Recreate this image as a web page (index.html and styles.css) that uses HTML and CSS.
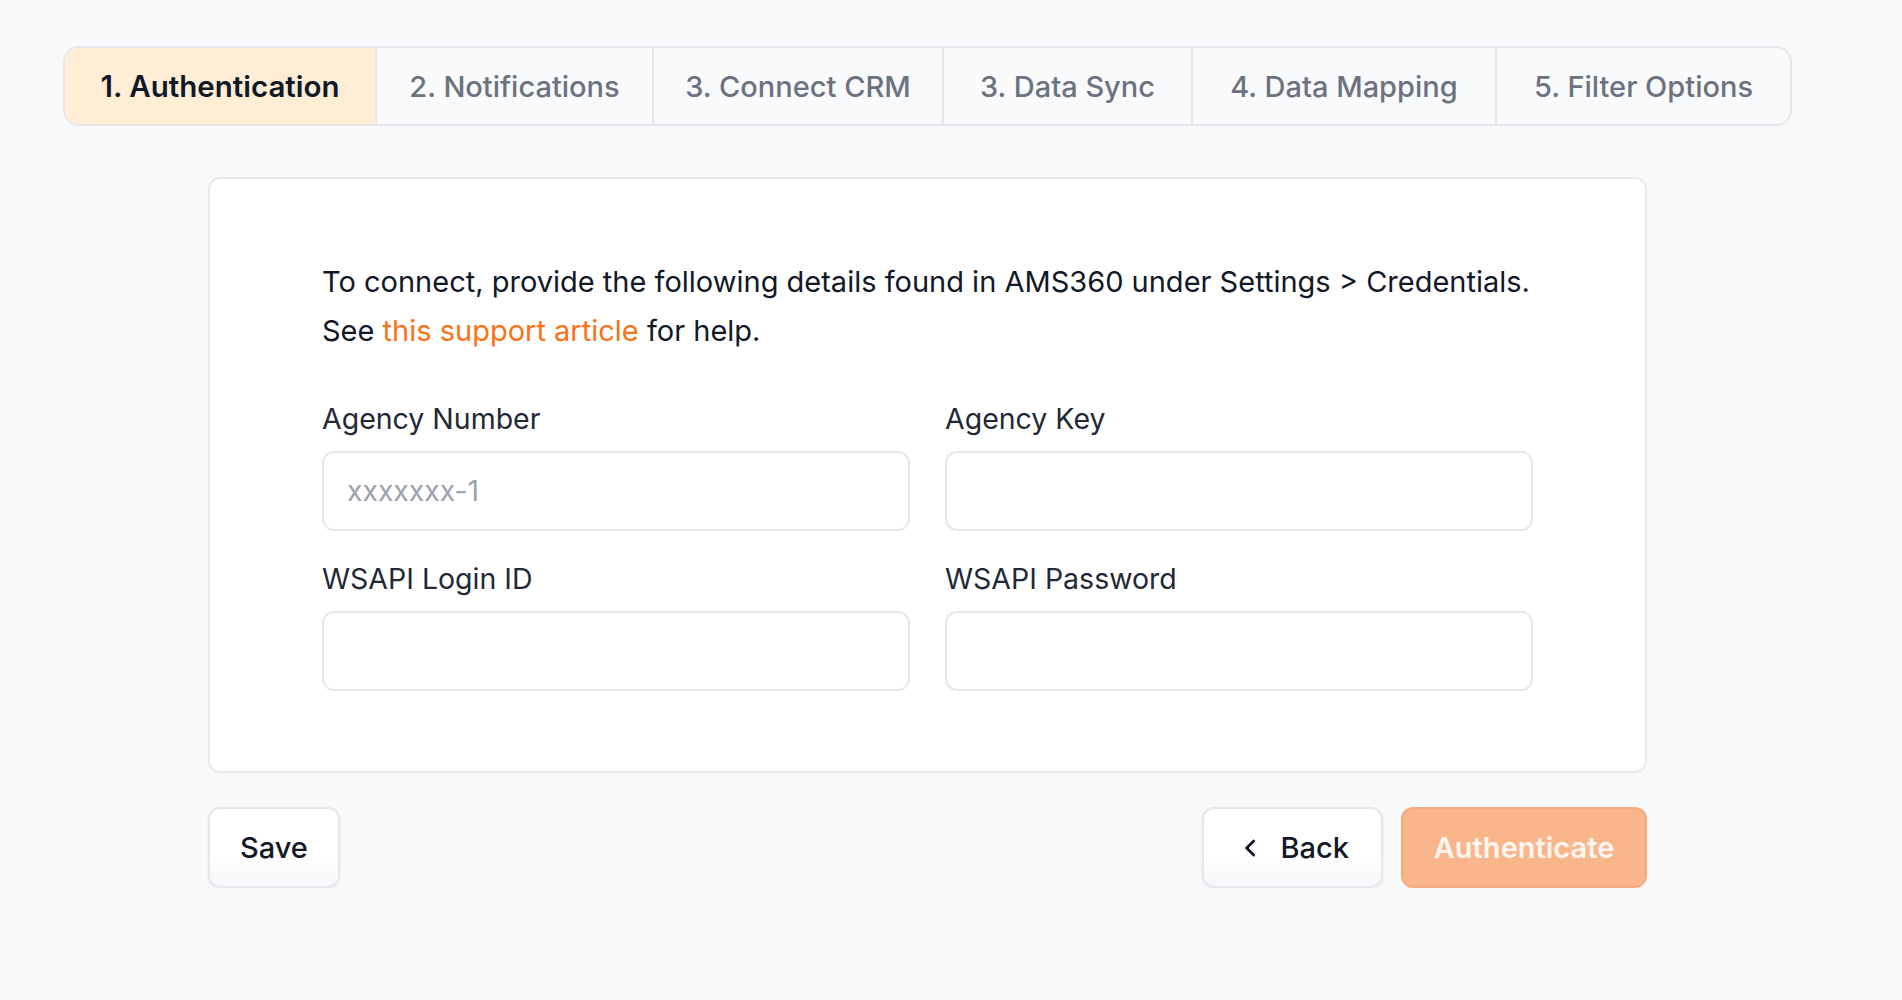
FILE: index.html
```html
<!DOCTYPE html>
<html lang="en">
<head>
<meta charset="utf-8">
<title>Authentication</title>
<link rel="stylesheet" href="styles.css">
</head>
<body>
<div class="page">
  <nav class="tabs">
    <div class="tab active">1. Authentication</div>
    <div class="tab">2. Notifications</div>
    <div class="tab">3. Connect CRM</div>
    <div class="tab">3. Data Sync</div>
    <div class="tab">4. Data Mapping</div>
    <div class="tab">5. Filter Options</div>
  </nav>
  <div class="content">
    <section class="card">
      <p class="intro">To connect, provide the following details found in AMS360 under Settings &gt; Credentials.<br>See <a href="#" class="link">this support article</a> for help.</p>
      <div class="grid">
        <label class="field">
          <span class="label">Agency Number</span>
          <input class="input" type="text" placeholder="xxxxxxx-1">
        </label>
        <label class="field">
          <span class="label">Agency Key</span>
          <input class="input" type="text">
        </label>
        <label class="field">
          <span class="label">WSAPI Login ID</span>
          <input class="input" type="text">
        </label>
        <label class="field">
          <span class="label">WSAPI Password</span>
          <input class="input" type="password">
        </label>
      </div>
    </section>
    <div class="actions">
      <button class="btn">Save</button>
      <div class="right">
        <button class="btn back"><svg class="chev" viewBox="0 0 24 24" width="26" height="26"><path d="M14.5 5.5L8 12l6.5 6.5" fill="none" stroke="currentColor" stroke-width="2.6" stroke-linecap="round" stroke-linejoin="round"/></svg>Back</button>
        <button class="btn primary">Authenticate</button>
      </div>
    </div>
  </div>
</div>
</body>
</html>
```
FILE: styles.css
```css
* { box-sizing: border-box; }
html, body { margin: 0; padding: 0; }
body {
  background: #f8f9fb;
  font-family: Inter, "Noto Sans", sans-serif;
  color: #111827;
}
.page {
  width: 1729px;
  margin-left: 63px;
  padding-top: 46px;
}
.tabs {
  display: flex;
  height: 80px;
  border: 2px solid #e5e7eb;
  border-radius: 16px;
  background: #f9fafb;
  overflow: hidden;
}
.tab {
  display: flex;
  align-items: center;
  justify-content: center;
  font-size: 29px;
  font-weight: 500;
  color: #6b7280;
  border-left: 2px solid #e5e7eb;
  flex: 0 0 auto;
}
.tab:nth-child(1) { width: 310px; border-left: none; color: #111827; background: #ffedd5; font-size: 29.5px; font-weight: 600; }
.tab:nth-child(2) { width: 277px; }
.tab:nth-child(3) { width: 290px; }
.tab:nth-child(4) { width: 249px; }
.tab:nth-child(5) { width: 304px; }
.tab:nth-child(6) { flex: 1 1 auto; }
.content {
  width: 1439px;
  margin: 51px auto 0;
}
.card {
  background: #fff;
  border: 2px solid #e8e9ed;
  border-radius: 12px;
  padding: 78px 112px 80px;
}
.intro {
  margin: 0;
  font-size: 29px;
  line-height: 49px;
  color: #111827;
}
.link { color: #f97316; text-decoration: none; }
.grid {
  display: grid;
  grid-template-columns: 1fr 1fr;
  column-gap: 35px;
  row-gap: 30px;
  margin-top: 46px;
}
.field { display: flex; flex-direction: column; }
.label {
  font-size: 28.5px;
  line-height: 36px;
  color: #1f2937;
  margin-bottom: 14px;
}
.input {
  height: 80px;
  border: 2px solid #e5e7eb;
  border-radius: 12px;
  background: #fff;
  font-family: inherit;
  font-size: 28.3px;
  padding: 0 23px;
  color: #111827;
  outline: none;
}
.input::placeholder { color: #9ca3af; }
.actions {
  display: flex;
  justify-content: space-between;
  margin-top: 34px;
}
.right { display: flex; gap: 18px; }
.btn {
  height: 81px;
  border: 2px solid #e5e7eb;
  border-radius: 12px;
  background: linear-gradient(#ffffff 60%, #f6f7f9);
  box-shadow: 0 1px 3px rgba(0,0,0,0.06);
  font-family: inherit;
  font-size: 29px;
  font-weight: 500;
  color: #111827;
  padding: 0 30px;
  display: flex;
  align-items: center;
}
.back { width: 181px; padding: 0 32px 0 34px; justify-content: space-between; }
.chev { color: #111827; }
.primary {
  width: 246px;
  justify-content: center;
  background: #f9b68a;
  border-color: #f6ab7f;
  color: rgba(255,255,255,0.9);
  font-weight: 600;
  box-shadow: none;
}
```
